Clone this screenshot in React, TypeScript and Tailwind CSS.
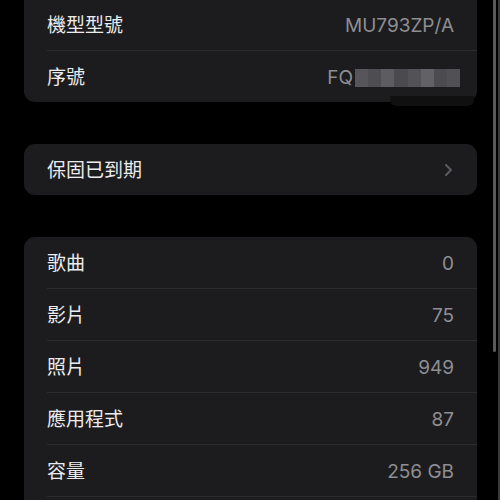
import React from "react";

type Row = { label: string; value?: React.ReactNode; chevron?: boolean };

const font = { fontFamily: 'Inter, "Noto Sans CJK TC", sans-serif' };

function SettingsRow({ row, last, tall }: { row: Row; last: boolean; tall: boolean }) {
  return (
    <div className="pl-[23px]">
      <div
        className={
          "flex items-center justify-between pr-[23px] pt-[3px] " +
          (tall ? "h-[52px] " : "h-[51px] ") +
          (last ? "" : "border-b border-[#2c2c2f]")
        }
      >
        <span className="text-[19px] text-[#ececee]">{row.label}</span>
        {row.chevron ? (
          <svg width="9" height="14" viewBox="0 0 9 14" className="mr-[1px] -mt-[3px]">
            <path d="M2 2l5 5-5 5" fill="none" stroke="#5c5c60" strokeWidth="2" strokeLinecap="round" strokeLinejoin="round" />
          </svg>
        ) : (
          <span className="text-[19px] text-[#8e8e93]">{row.value}</span>
        )}
      </div>
    </div>
  );
}

function Card({
  rows,
  className = "",
  tall = false,
  openBottom = false,
}: {
  rows: Row[];
  className?: string;
  tall?: boolean;
  openBottom?: boolean;
}) {
  return (
    <div className={"overflow-hidden bg-[#1c1c1e] " + className}>
      {rows.map((row, i) => (
        <SettingsRow key={row.label} row={row} tall={tall} last={!openBottom && i === rows.length - 1} />
      ))}
    </div>
  );
}

function BlurredSerial() {
  const blocks = ["#55555a", "#4d4d52", "#5c5c61", "#4a4a4f", "#525257", "#616166", "#4b4b50", "#505055"];
  return (
    <span className="-mr-[6px] flex items-center">
      <span>FQ</span>
      <span className="ml-[2px] flex h-[18px] w-[105px]">
        {blocks.map((c, i) => (
          <span key={i} className="h-full flex-1" style={{ backgroundColor: c }} />
        ))}
      </span>
    </span>
  );
}

export default function App() {
  return (
    <div className="relative h-[500px] w-[500px] overflow-hidden bg-black" style={font}>
      <div className="pl-[24px] pr-[23px]">
        <Card
          className="rounded-b-[11px]"
          rows={[
            { label: "機型型號", value: "MU793ZP/A" },
            { label: "序號", value: <BlurredSerial /> },
          ]}
        />
        <Card className="mt-[42px] rounded-[11px]" rows={[{ label: "保固已到期", chevron: true }]} />
        <Card
          className="mt-[42px] rounded-t-[11px]"
          tall
          openBottom
          rows={[
            { label: "歌曲", value: "0" },
            { label: "影片", value: "75" },
            { label: "照片", value: "949" },
            { label: "應用程式", value: "87" },
            { label: "容量", value: "256 GB" },
          ]}
        />
        <div className="h-[20px] bg-[#1c1c1e]" />
      </div>
      <div className="absolute left-[390px] top-[96px] h-[10px] w-[84px] rounded-b-[6px] bg-[#101011]" />
      <div className="absolute right-[4px] top-0 h-[352px] w-[3px] rounded-b-full bg-[#5a5a5e]" />
      <div className="absolute right-0 top-0 h-full w-[2px] bg-[#3a3a3c]" />
    </div>
  );
}
